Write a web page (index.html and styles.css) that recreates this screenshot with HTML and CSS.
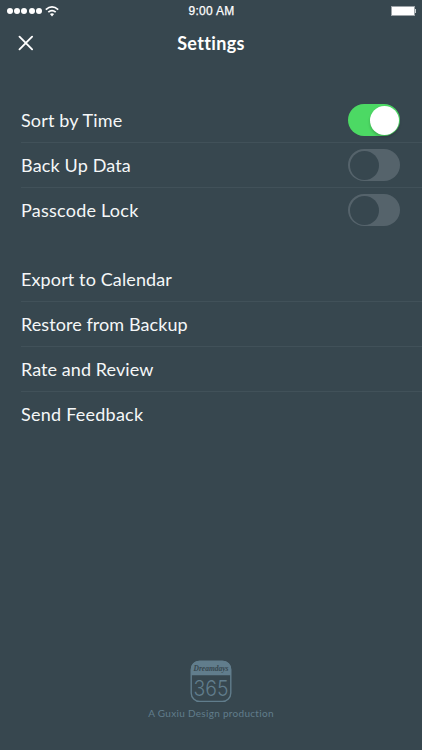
FILE: index.html
```html
<!DOCTYPE html>
<html>
<head>
    <title>Settings</title>
    <meta charset="utf-8">

    <link rel="stylesheet" href="styles.css">

</head>
<body>
<div class="screen">
    <div class="status">
        <div class="signal">
            <i></i><i></i><i></i><i></i><i></i>
            <svg class="wifi" width="14" height="11" viewBox="0 0 14 11">
                <path d="M0.8 3.6 Q7 -1.8 13.2 3.6 M3.3 6.2 Q7 2.9 10.7 6.2" fill="none" stroke="#fff" stroke-width="1.7"/>
                <path d="M4.9 8 Q7 6.3 9.1 8 L7 10.4 Z" fill="#fff"/>
            </svg>
        </div>
        <div class="clock">9:00 AM</div>
        <div class="battery"><span></span></div>
    </div>

    <header>
        <svg class="close" width="16" height="16" viewBox="0 0 16 16">
            <path d="M1.5 1.7 L14.1 14.3 M14.1 1.7 L1.5 14.3" stroke="#fff" stroke-width="1.9" stroke-linecap="round"/>
        </svg>
        <h1>Settings</h1>
    </header>

    <ul class="options">
        <li><span class="sort">Sort by Time</span><div class="switch on"></div></li>
        <li><span class="data">Back Up Data</span><div class="switch"></div></li>
        <li><span class="lock">Passcode Lock</span><div class="switch"></div></li>
    </ul>

    <ul class="links">
        <li><span class="export">Export to Calendar</span></li>
        <li><span class="restore">Restore from Backup</span></li>
        <li><span class="rate">Rate and Review</span></li>
        <li><span class="send">Send Feedback</span></li>
    </ul>

    <footer>
        <svg class="logo" width="42" height="43" viewBox="0 0 42 43">
            <rect x="1.2" y="1.2" width="39.6" height="40.2" rx="8.5" fill="none" stroke="#617d8c" stroke-width="1.4"/>
            <path d="M1 15.2 V9.5 Q1 1 9.5 1 H32.5 Q41 1 41 9.5 V15.2 Z" fill="#617d8c"/>
            <text class="brand" x="21" y="11.4" textLength="35" lengthAdjust="spacingAndGlyphs">Dreamdays</text>
            <text class="number" x="21" y="36" textLength="35" lengthAdjust="spacingAndGlyphs">365</text>
        </svg>
        <p>A Guxiu Design production</p>
    </footer>
</div>
</body>
</html>
```

FILE: styles.css
```css
html,body{
    padding: 0;
    margin: 0;
    background: #37474f;
    color: #fff;
    font-family: Lato, sans-serif;
}

.screen{
    width: 422px;
    height: 750px;
    display: flex;
    flex-direction: column;
    overflow: hidden;
}

.status{
    height: 21px;
    padding: 0 6px 0 7px;
    display: grid;
    grid-template-columns: 1fr auto 1fr;
    align-items: center;
}

.signal{
    display: flex;
    align-items: center;
    gap: 1.2px;
}

.signal i{
    width: 6px;
    height: 6px;
    border-radius: 50%;
    background: #fff;
}

.wifi{
    margin-left: 2px;
}

.clock{
    font: 12px/21px "Liberation Sans", sans-serif;
    padding-top: 1px;
    letter-spacing: 0.3px;
    -webkit-text-stroke: 0.25px #fff;
}

.battery{
    justify-self: end;
    display: flex;
    align-items: center;
    padding-bottom: 1px;
}

.battery span{
    width: 22px;
    height: 8px;
    border: 1px solid #9ca3a7;
    background: #fff;
}

.battery:after{
    content: "";
    width: 1.5px;
    height: 4px;
    background: #c8cdd0;
}

header{
    height: 44px;
    padding: 0 18px;
    display: grid;
    grid-template-columns: 1fr auto 1fr;
    align-items: center;
}

h1{
    margin: 0;
    font-size: 18px;
    line-height: 44px;
    font-weight: bold;
    letter-spacing: 0.35px;
}

ul{
    margin: 0;
    padding: 0 0 0 21px;
    list-style: none;
}

.options{
    margin-top: 33px;
}

.links{
    margin-top: 24px;
}

li{
    height: 45px;
    box-sizing: border-box;
    padding-right: 22px;
    display: flex;
    align-items: center;
    justify-content: space-between;
    border-bottom: 1px solid #415159;
    font-size: 18px;
    color: #f5f7f8;
}

li:last-child{
    border-bottom-color: transparent;
}

.sort, .data{
    letter-spacing: 0.15px;
}

.lock, .send{
    letter-spacing: 0.24px;
}

.export{
    letter-spacing: 0.12px;
}

.restore, .rate{
    letter-spacing: 0.07px;
}

.switch{
    width: 52px;
    height: 32px;
    box-sizing: border-box;
    padding: 1.5px;
    border-radius: 16px;
    background: #55636b;
    display: flex;
}

.switch:before{
    content: "";
    width: 29px;
    height: 29px;
    border-radius: 50%;
    background: #37474f;
}

.switch.on{
    background: #4cd964;
    justify-content: flex-end;
}

.switch.on:before{
    background: #fff;
    box-shadow: 0 2px 3px rgba(0,0,0,0.2);
}

footer{
    margin-top: auto;
    padding-bottom: 29px;
    text-align: center;
    color: #617d8c;
}

.logo{
    display: block;
    margin: 0 auto;
}

.logo text{
    text-anchor: middle;
}

.brand{
    font: italic bold 8.5px "Liberation Serif", serif;
    fill: #37474f;
}

.number{
    font: 300 22px Inter, sans-serif;
    fill: #617d8c;
}

footer p{
    margin: 2px 0 0;
    font-size: 10px;
    line-height: 16px;
    letter-spacing: 0.3px;
}
```
